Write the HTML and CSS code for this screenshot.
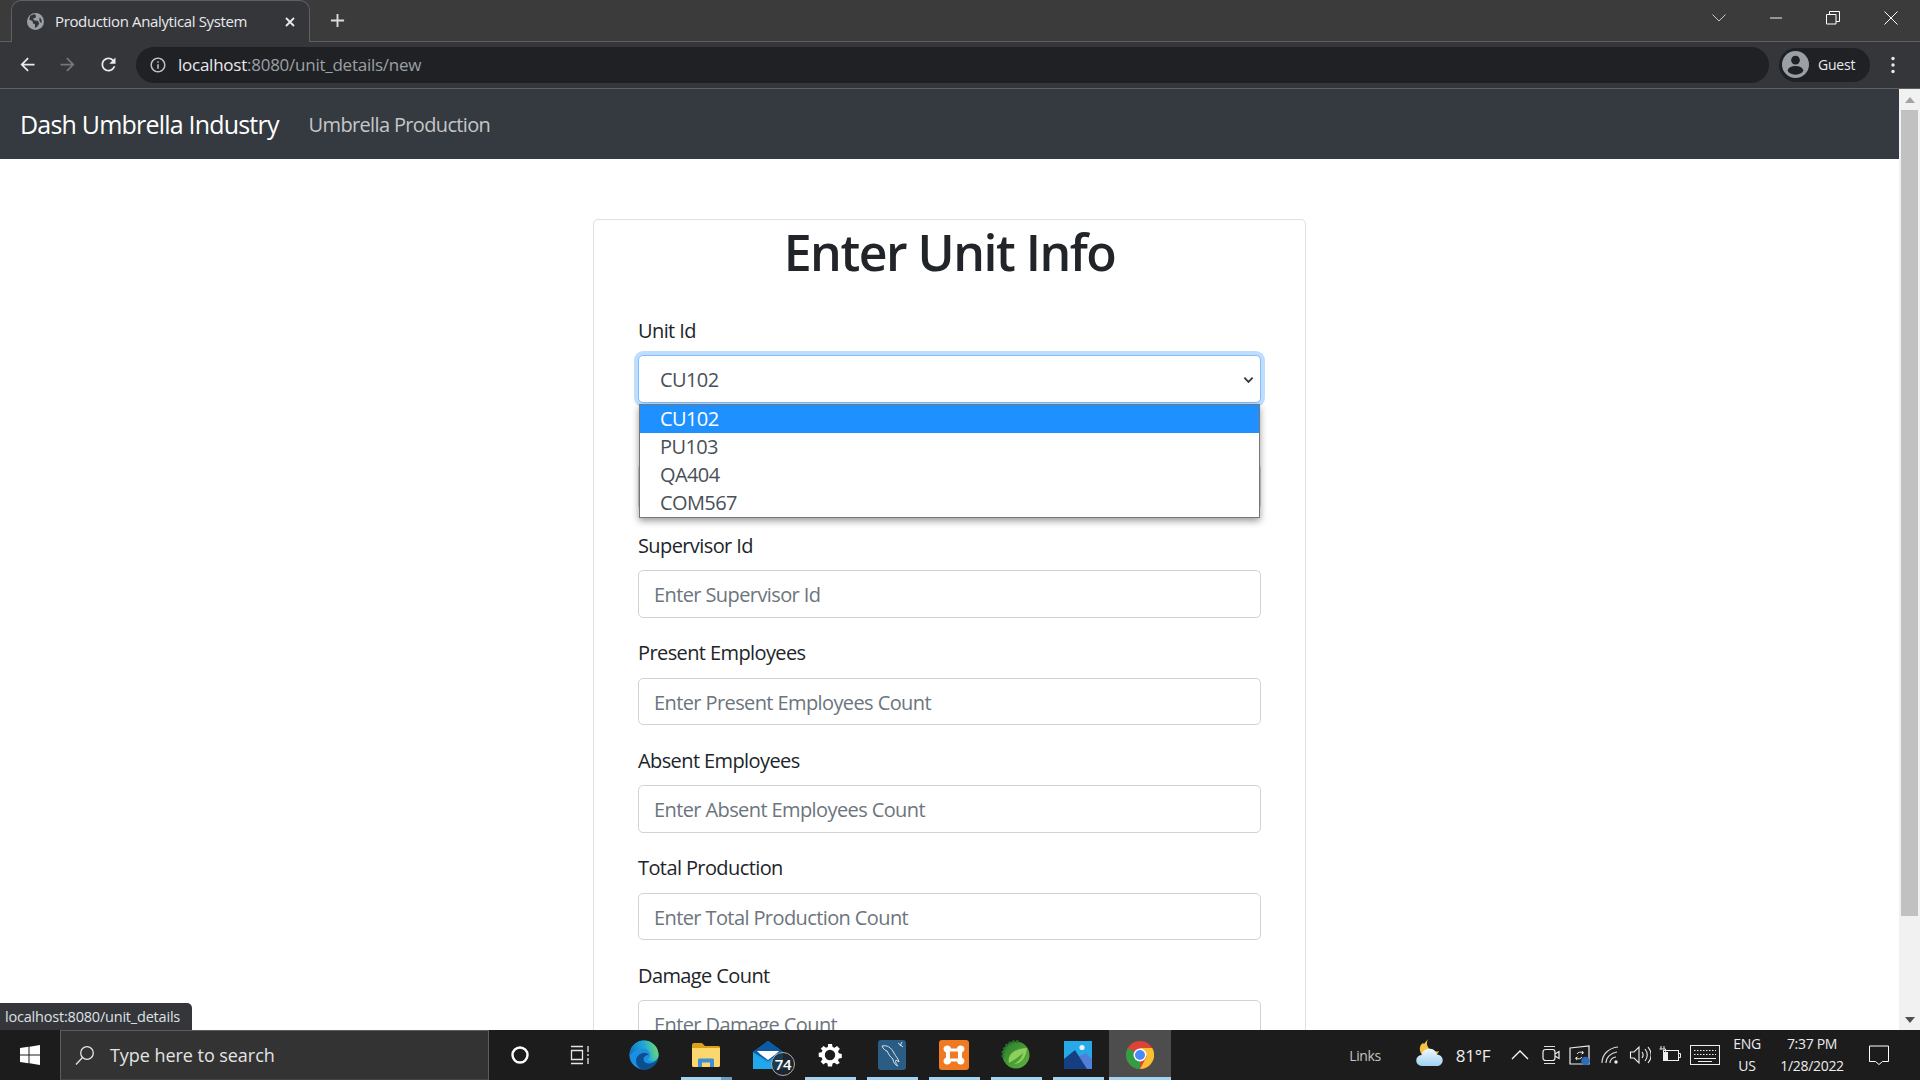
FILE: index.html
```html
<!DOCTYPE html>
<html lang="en">
<head>
<meta charset="utf-8">
<title>Production Analytical System</title>
<link rel="stylesheet" href="styles.css">
</head>
<body>
<div class="screen">
  <header class="browser">
    <div class="tabstrip">
      <div class="tab">
        <svg class="favicon" viewBox="0 0 16 16"><circle cx="8" cy="8" r="8" fill="#9aa0a6"/><path d="M7 1 3 2.500 2 6l3 1.500 1 2.500 1.500.5V14l2-1 2-3-1-2.500L7 7 5.500 5.500 8 4.500 8.500 2.500zM12 4l1.500 2 .5 3h-1.500l-1-2.500z" fill="#35363a"/></svg>
        <span class="tab-title">Production Analytical System</span>
        <svg class="tab-close" viewBox="0 0 12 12"><path d="M2 2l8 8M10 2l-8 8" stroke="#e8eaed" stroke-width="1.800"/></svg>
      </div>
      <svg class="newtab" viewBox="0 0 16 16"><path d="M8 1v14M1 8h14" stroke="#dadce0" stroke-width="2"/></svg>
      <div class="winctl">
        <svg class="wc-chev" viewBox="0 0 14 8"><path d="M.5.500l6.500 6.500 6.500-6.500" fill="none" stroke="#c8c8c8"/></svg>
        <svg class="wc-min" viewBox="0 0 14 2"><path d="M0 1h13" stroke="#fff"/></svg>
        <svg class="wc-max" viewBox="0 0 14 14"><path d="M.5 3.500h9.500v9.500h-9.500zM3.500 3.500v-3h10v10h-3.500" fill="none" stroke="#fff"/></svg>
        <svg class="wc-close" viewBox="0 0 14 14"><path d="M.5.500l13 13M13.500.500l-13 13" stroke="#fff"/></svg>
      </div>
    </div>
    <div class="toolbar">
      <svg class="tb-icon back" viewBox="0 0 24 24"><path d="M20 11H7.830l5.590-5.590L12 4l-8 8 8 8 1.410-1.410L7.830 13H20z" fill="#e8eaed"/></svg>
      <svg class="tb-icon fwd" viewBox="0 0 24 24"><path d="M4 11h12.170l-5.590-5.590L12 4l8 8-8 8-1.410-1.410L16.170 13H4z" fill="#73767a"/></svg>
      <svg class="tb-icon reload" viewBox="0 0 24 24"><path d="M17.650 6.350C16.200 4.900 14.210 4 12 4c-4.420 0-7.990 3.580-7.990 8s3.570 8 7.990 8c3.730 0 6.840-2.550 7.730-6h-2.080c-.82 2.330-3.040 4-5.650 4-3.310 0-6-2.690-6-6s2.690-6 6-6c1.660 0 3.140.69 4.220 1.780L13 11h7V4z" fill="#e8eaed"/></svg>
      <div class="omnibox">
        <svg class="info" viewBox="0 0 24 24"><path d="M11 7h2v2h-2zm0 4h2v6h-2zm1-9C6.480 2 2 6.480 2 12s4.480 10 10 10 10-4.480 10-10S17.520 2 12 2zm0 18c-4.410 0-8-3.590-8-8s3.590-8 8-8 8 3.590 8 8-3.590 8-8 8z" fill="#bdc1c6"/></svg>
        <span class="url"><span class="url-host">localhost</span>:8080/unit_details/new</span>
      </div>
      <div class="profile">
        <svg class="avatar" viewBox="0 0 28 28"><circle cx="14" cy="14" r="14" fill="#9aa0a6"/><circle cx="14" cy="9.500" r="4.500" fill="#202124"/><ellipse cx="14" cy="20" rx="8" ry="4.500" fill="#202124"/></svg>
        <span class="guest">Guest</span>
      </div>
      <svg class="kebab" viewBox="0 0 4 18"><circle cx="2" cy="2.500" r="1.700" fill="#e8eaed"/><circle cx="2" cy="9" r="1.700" fill="#e8eaed"/><circle cx="2" cy="15.500" r="1.700" fill="#e8eaed"/></svg>
    </div>
  </header>

  <div class="viewport">
    <main class="page">
      <nav class="navbar">
        <a class="brand">Dash Umbrella Industry</a>
        <a class="navlink">Umbrella Production</a>
      </nav>
      <section class="card">
        <h1>Enter Unit Info</h1>
        <div class="group select-group">
          <label>Unit Id</label>
          <div class="select" role="combobox" aria-expanded="true">
            <span>CU102</span>
            <svg class="caret" viewBox="0 0 12 8"><path d="M1.500 1.500 6 6l4.500-4.500" fill="none" stroke="#343a40" stroke-width="2"/></svg>
          </div>
          <ul class="options" role="listbox">
            <li class="selected">CU102</li>
            <li>PU103</li>
            <li>QA404</li>
            <li>COM567</li>
          </ul>
        </div>
        <div class="group"><label>&nbsp;</label><div class="input"></div></div>
        <div class="group"><label>Supervisor Id</label><div class="input">Enter Supervisor Id</div></div>
        <div class="group"><label>Present Employees</label><div class="input">Enter Present Employees Count</div></div>
        <div class="group"><label>Absent Employees</label><div class="input">Enter Absent Employees Count</div></div>
        <div class="group"><label>Total Production</label><div class="input">Enter Total Production Count</div></div>
        <div class="group"><label>Damage Count</label><div class="input">Enter Damage Count</div></div>
      </section>
      <div class="status">localhost:8080/unit_details</div>
    </main>
    <aside class="scrollbar">
      <svg class="sb-arrow" viewBox="0 0 10 6"><path d="M5 0l5 6H0z" fill="#a3a3a3"/></svg>
      <div class="sb-track"><div class="sb-thumb"></div></div>
      <svg class="sb-arrow" viewBox="0 0 10 6"><path d="M0 0h10L5 6z" fill="#505050"/></svg>
    </aside>
  </div>

  <footer class="taskbar">
    <div class="start"><svg viewBox="0 0 20 20"><path d="M0 3l8.500-1.200v7.700H0zM9.500 1.700 20 0v9.500H9.500zM0 10.500h8.500v7.700L0 17zM9.500 10.500H20V20L9.500 18.300z" fill="#fff"/></svg></div>
    <div class="search">
      <svg viewBox="0 0 20 20"><circle cx="12" cy="8" r="6.300" fill="none" stroke="#e6e6e6" stroke-width="1.300"/><path d="M7.500 12.500 1 19.500" stroke="#e6e6e6" stroke-width="1.300"/></svg>
      <span>Type here to search</span>
    </div>
    <div class="cell w61"><svg class="i18" viewBox="0 0 18 18"><circle cx="9" cy="9" r="7.500" fill="none" stroke="#fff" stroke-width="2.400"/></svg></div>
    <div class="cell w60"><svg class="i20" viewBox="0 0 20 20"><path d="M1 1.500h12M1 18.500h12M1.500 5.500h11v9h-11zM18 1v6M18 9v2M18 13v6" fill="none" stroke="#e6e6e6" stroke-width="1.300"/></svg></div>

    <div class="apps">
      <div class="app">
        <svg class="i30" viewBox="0 0 32 32"><defs><linearGradient id="eg" x1="0" y1=".6" x2="1" y2=".4"><stop offset="0" stop-color="#0f74c4"/><stop offset=".55" stop-color="#22a8d8"/><stop offset="1" stop-color="#6fdc6a"/></linearGradient></defs><circle cx="16" cy="16" r="15.500" fill="#1a8fe3"/><path d="M16 .5A15.500 15.500 0 0 1 31.500 16c0 4-3 6.500-6.500 6.500-3 0-5-1-5-2 2-1 2.500-2.500 2.500-4 0-4-3-7.500-8-7.500S5 12 .6 17C.5 8 7 .5 16 .5z" fill="url(#eg)"/><path d="M31.400 18c-1 7.500-7.400 13.500-15.400 13.500-5 0-8.500-5-8.500-9.500s4-8.500 9-8.500c2.500 0 4 1 4.500 2.500-3 0-5.500 2-5.500 4.500 0 3 3 4.500 6.500 4.500 4 0 7-2 9.400-6.500z" fill="#0c4f8f"/></svg>
      </div>
      <div class="app run">
        <svg class="folder" viewBox="0 0 28 24"><path d="M0 2c0-1 .7-2 2-2h8l3 3h13.500c.8 0 1.500.7 1.500 1.500V8H0z" fill="#d9a01a"/><path d="M0 5h28v17.500c0 .8-.7 1.500-1.500 1.500h-25C.7 24 0 23.300 0 22.500z" fill="#fbd76e"/><path d="M6 17c0-.8.700-1.500 1.500-1.500h13c.8 0 1.500.7 1.500 1.500v7h-4v-4.500h-8V24H6z" fill="#3d8fd6"/></svg>
        <i class="split"></i>
      </div>
      <div class="app">
        <svg class="mail" viewBox="0 0 30 28"><path d="M0 11 15 0l15 11v17H0z" fill="#1b9ae2"/><path d="M0 11 15 0l15 11-15 9z" fill="#0c5aa6"/><path d="M4 10h22l-3 3-8 6-8-6z" fill="#fff"/><path d="M0 12l15 10 15-10v16H0z" fill="#22a6ec"/></svg>
        <span class="badge">74</span>
      </div>
      <div class="app run">
        <svg class="i24" viewBox="0 0 24 24"><path d="M10 1h4l.6 3 1.900.8L19 3l2.800 2.800-1.800 2.600.8 1.900 3 .6v4l-3 .6-.8 1.900 1.800 2.500L19 21.600l-2.500-1.800-1.900.8-.6 3h-4l-.6-3-1.900-.8L5.500 21.600 2.700 18.800l1.800-2.500-.8-1.900-3-.6v-4l3-.6.8-1.900L2.700 5.800 5.500 3l2.500 1.800 1.900-.8zM12 6.800a5.200 5.200 0 1 0 0 10.400 5.200 5.200 0 0 0 0-10.400z" fill="#fff" fill-rule="evenodd"/></svg>
      </div>
      <div class="app run">
        <svg class="i30" viewBox="0 0 30 30"><rect x="1" width="28" height="30" rx="3" fill="#2b5d84"/><path d="M5 6c5-1 9 1 12 7 2 4 4 5 5 9l-3-2c-1 2 0 4 2 6-3-1-5-4-5-7-3-2-5-6-6-8-1 0-4-2-5-5zM21 3l5 4M25 2l-2 4" fill="none" stroke="#d5e2ec" stroke-width="1"/></svg>
      </div>
      <div class="app run">
        <svg class="i30" viewBox="0 0 30 30"><rect width="30" height="30" rx="3" fill="#ef7a22"/><path d="M6 6c3-1.500 5.500 0 6 2.500h6C18.500 6 21 4.500 24 6c2 1.500 2 5-1 6.500v5c3 1.500 3 5 1 6.500-3 1.500-5.500 0-6-2.500h-6C11.500 24 9 25.500 6 24c-2-1.500-2-5 1-6.500v-5C4 11 4 7.500 6 6zM11 11.500v7h8v-7z" fill="#fff" fill-rule="evenodd"/></svg>
      </div>
      <div class="app run">
        <svg class="i30" viewBox="0 0 30 30"><defs><linearGradient id="sg" x1="0" y1="0" x2="1" y2="1"><stop offset="0" stop-color="#2a7d2e"/><stop offset="1" stop-color="#62b33e"/></linearGradient></defs><circle cx="15" cy="15" r="13.500" fill="url(#sg)"/><path d="M2 17A13.500 13.500 0 0 1 19 2" fill="none" stroke="#256f2b" stroke-width="3" stroke-dasharray="2.200 1.600"/><path d="M8 23c-2-8 4-14 18-15-1 10-6 16-13 16 4-2 8-6 9-11-4 4-9 7-14 10z" fill="#8ccf5c"/></svg>
      </div>
      <div class="app run">
        <svg class="i28" viewBox="0 0 28 28"><rect width="28" height="28" fill="#27a9e8"/><circle cx="18" cy="6.500" r="2.600" fill="#e6f5fc"/><path d="M14 16l8-4 6 6v10H14z" fill="#4f7fd6"/><path d="M0 28V18l11-9 12 19z" fill="#163f82"/></svg>
      </div>
      <div class="app active run">
        <svg class="i28" viewBox="0 0 28 28"><circle cx="14" cy="14" r="14" fill="#db4437"/><path d="M14 14 1.900 7A14 14 0 0 0 14 28z" fill="#2f9e44"/><path d="M14 7h12.200A14 14 0 0 1 14 28l7-13z" fill="#fbc02d"/><circle cx="14" cy="14" r="6.500" fill="#fff"/><circle cx="14" cy="14" r="5" fill="#4a8af4"/></svg>
      </div>
    </div>

    <div class="tray">
      <span class="t-links">Links</span>
      <span class="t-weather"><svg class="i32" viewBox="0 0 32 32"><path d="M13 0c-2 4-1 8 2 10 3 3 7 3 9 2-2 5-8 8-14 6C4 15 3 7 8 4l1 1z" fill="#f6c244"/><defs><linearGradient id="cg" x1="0" y1="0" x2="0" y2="1"><stop offset="0" stop-color="#eef8fd"/><stop offset="1" stop-color="#9fd2f2"/></linearGradient></defs><path d="M7 27a5.500 5.500 0 0 1-.5-11 8 8 0 0 1 15.500-.5 5.800 5.800 0 0 1 1 11.500z" fill="url(#cg)"/></svg></span>
      <span class="t-temp">81°F</span>
      <span class="t-chev"><svg class="i18" viewBox="0 0 18 18"><path d="M1 13 9 5l8 8" fill="none" stroke="#fff" stroke-width="1.300"/></svg></span>
      <span class="t-video"><svg class="i20" viewBox="0 0 20 20"><path d="M3 1.500h11M3 18.500h11" stroke="#ddd" stroke-width="1"/><rect x="2" y="4.500" width="12" height="11" rx="2.500" fill="none" stroke="#eee" stroke-width="1.200"/><path d="M14 9l4-2.500v7L14 11" fill="none" stroke="#eee" stroke-width="1.200"/></svg></span>
      <span class="t-screen"><svg class="i22" viewBox="0 0 22 22"><path d="M1 4l19-2v18H1z" fill="none" stroke="#eee" stroke-width="1.200"/><path d="M8 10c1-2 4-2.500 6-1M13 7l1.500 2-2 1M13 13c-1 2-4 2.500-6 1M8 16l-1.500-2 2-1" fill="none" stroke="#eee"/><circle cx="16.500" cy="17" r="4.300" fill="#2a6ebb"/></svg></span>
      <span class="t-wifi"><svg class="i20" viewBox="0 0 20 20"><g fill="none" stroke="#ddd" stroke-width="1.100"><path d="M1 18C1 9 8 3 17 2"/><path d="M5 18c0-6 5-10 11-11"/><path d="M9 18c0-3 2.500-6 6-6"/></g><circle cx="15" cy="17" r="1.700" fill="#eee"/></svg></span>
      <span class="t-vol"><svg class="i22" viewBox="0 0 22 22"><path d="M1.500 8h3.500l5-5v16l-5-5H1.500z" fill="none" stroke="#eee" stroke-width="1.100"/><path d="M13 8c1.500 2 1.500 4 0 6M16 5c3 3.500 3 8.500 0 12M19 3c4 5 4 11 0 16" fill="none" stroke="#eee" stroke-width="1.100"/></svg></span>
      <span class="t-batt"><svg class="i22" viewBox="0 0 22 22"><rect x="4.500" y="6.500" width="15" height="10" fill="none" stroke="#eee"/><rect x="5" y="8" width="4" height="8" fill="#eee"/><path d="M20 9.500h1.500v4H20M2 2v3M5 2v3M.5 5h6v2.500l-2 2v3" fill="none" stroke="#eee"/></svg></span>
      <span class="t-kbd"><svg class="kbd" viewBox="0 0 30 20"><rect x=".5" y=".5" width="29" height="19" fill="none" stroke="#eee"/><path d="M4 5.500h22M4 9.500h22" stroke="#eee" stroke-dasharray="1.500 1.500"/><path d="M4 13.500h22M8 16.500h14" stroke="#eee"/></svg></span>
      <span class="t-lang"><span>ENG</span><span>US</span></span>
      <span class="t-clock"><span>7:37 PM</span><span>1/28/2022</span></span>
      <span class="t-notif"><svg class="notif" viewBox="0 0 20 20"><path d="M.5 1h19v15.500h-6l-3.500 3-3.500-3h-6z" fill="none" stroke="#fff"/></svg></span>
    </div>
  </footer>
</div>
</body>
</html>
```

FILE: styles.css
```css
* { box-sizing: border-box; }
html, body { margin: 0; height: 100%; overflow: hidden; }
body { font-family: "Open Sans", "Noto Sans", sans-serif; color: #212529; background: #fff; }
.screen { width: 1920px; height: 1080px; display: flex; flex-direction: column; overflow: hidden; }

/* Browser chrome */
.browser { flex: none; height: 89px; background: #35363a; display: flex; flex-direction: column; }
.tabstrip { height: 42px; background: #3b3b3b; border-bottom: 1px solid #5f6062; display: flex; align-items: center; }
.tab { width: 299px; height: 42px; margin: 0 0 0 11px; align-self: flex-start; background: #35363a; border: 1px solid #5f6062; border-bottom: 0; border-radius: 10px 10px 0 0; display: flex; align-items: center; padding: 0 13px 0 15px; }
.favicon { width: 17px; height: 17px; flex: none; }
.tab-title { margin-left: 11px; margin-top: -2px; font-size: 15px; color: #e8eaed; letter-spacing: -0.36px; white-space: nowrap; flex: 1; }
.tab-close { width: 12px; height: 12px; }
.newtab { width: 15px; height: 15px; margin-left: 20px; }
.winctl { margin-left: auto; display: flex; align-items: center; height: 36px; margin-bottom: 5px; }
.wc-chev { width: 14px; height: 8px; margin-right: 44px; }
.wc-min { width: 13px; height: 2px; margin-right: 43px; }
.wc-max { width: 14px; height: 14px; margin-right: 44px; }
.wc-close { width: 14px; height: 14px; margin-right: 22px; }

.toolbar { height: 47px; border-bottom: 1px solid #5f6062; display: flex; align-items: center; padding: 0 0 1px; }
.tb-icon { width: 21px; height: 21px; flex: none; }
.back { margin-left: 17px; }
.fwd { margin-left: 19px; }
.reload { margin-left: 20px; }
.omnibox { margin-left: 17px; width: 1633px; height: 36px; border-radius: 18px; background: #202124; display: flex; align-items: center; padding-left: 13px; }
.info { width: 18px; height: 18px; flex: none; }
.url { margin-left: 11px; font-size: 17px; color: #9aa0a6; letter-spacing: -0.25px; }
.url-host { color: #e8eaed; }
.profile { margin-left: 10px; width: 91px; height: 34px; border-radius: 17px; background: #202124; display: flex; align-items: center; padding-left: 3px; }
.avatar { width: 27px; height: 27px; }
.guest { margin-left: 9px; font-size: 14px; color: #e8eaed; letter-spacing: -0.2px; }
.kebab { width: 4px; height: 18px; margin-left: 21px; }

/* Page */
.viewport { flex: 1; min-height: 0; display: flex; }
.page { flex: 1; min-width: 0; position: relative; overflow: hidden; }
.navbar { height: 70px; background: #343a40; display: flex; align-items: center; padding: 0 20px; }
.brand { font-size: 25px; color: #fff; letter-spacing: -0.8px; }
.navlink { margin-left: 30px; font-size: 20px; color: rgba(255,255,255,.72); letter-spacing: -0.65px; }
.card { width: 713px; margin: 60px auto 0; border: 1px solid #dfdfdf; border-radius: 5px; padding: 2px 44px 0; }
h1 { margin: 0 0 33px; font-size: 50px; font-weight: 600; line-height: 60px; text-align: center; letter-spacing: -1.5px; color: #212529; }
.group { margin-bottom: 20px; position: relative; }
label { display: block; font-size: 20px; line-height: 30px; padding-top: .5px; margin-bottom: 9.5px; letter-spacing: -0.6px; color: #212529; }
.input { height: 47.5px; border: 1px solid #ced4da; border-radius: 5px; padding: 0 15px; font-size: 20px; line-height: 48.5px; color: #6c757d; letter-spacing: -0.6px; }
.select { height: 47.5px; border: 1px solid #80bdff; border-radius: 5px; box-shadow: 0 0 0 4px rgba(0,123,255,.25); display: flex; align-items: center; justify-content: space-between; padding: 2px 6px 0 21px; font-size: 20px; color: #495057; letter-spacing: -0.6px; background: #fff; }
.caret { width: 11px; height: 8px; }
.options { position: absolute; left: 1px; right: 1px; top: 88.5px; z-index: 2; margin: 0; padding: 0; list-style: none; background: #fff; border: 1px solid #767676; box-shadow: 0 3px 7px rgba(0,0,0,.4); font-size: 20px; color: #495057; letter-spacing: -0.6px; }
.options li { height: 28px; line-height: 28px; padding-left: 20px; }
.options .selected { background: #1e90ff; color: #fff; }
.status { position: absolute; left: 0; bottom: 0; height: 27px; width: 192px; background: #35363a; border-radius: 0 5px 0 0; padding-left: 5px; font-size: 14.500px; line-height: 27px; color: #dee1e6; letter-spacing: -0.2px; white-space: nowrap; }

.scrollbar { flex: none; width: 21px; background: #f1f1f1; display: flex; flex-direction: column; align-items: center; }
.sb-arrow { width: 10px; height: 6px; flex: none; margin: 8px 0 7px; }
.sb-track { flex: 1; align-self: stretch; padding: 0 2px; }
.sb-thumb { height: 806px; background: #c1c1c1; }

/* Taskbar */
.taskbar { flex: none; height: 50px; background: #1c1c1c; display: flex; align-items: center; color: #fff; }
.start { width: 60px; height: 50px; display: flex; align-items: center; justify-content: center; }
.start svg { width: 20px; height: 20px; }
.search { width: 429px; height: 50px; background: #333; border: 1px solid #5c5c5c; border-bottom-color: #444; display: flex; align-items: center; padding-left: 14px; }
.search svg { width: 20px; height: 20px; flex: none; }
.search span { margin-left: 15px; font-size: 18px; color: #e4e4e4; letter-spacing: -0.05px; }
.cell { height: 50px; display: flex; align-items: center; justify-content: center; }
.w61 { width: 61px; }
.w60 { width: 60px; }
.i18 { width: 18px; height: 18px; }
.i20 { width: 20px; height: 20px; }
.i22 { width: 22px; height: 22px; }
.i24 { width: 24px; height: 24px; }
.i28 { width: 28px; height: 28px; }
.i30 { width: 30px; height: 30px; }
.i32 { width: 32px; height: 32px; }
.folder { width: 28px; height: 24px; margin-top: -1px; }
.mail { width: 30px; height: 28px; }
.apps { display: flex; margin-left: 3px; height: 50px; }
.app { width: 62px; height: 50px; display: flex; align-items: center; justify-content: center; position: relative; }
.run::after { content: ""; position: absolute; left: 6px; right: 5px; bottom: 0; height: 3px; background: #a6d2f2; }
.active { background: #4d4d4d; }
.active::after { left: 0; right: 0; }
.split { position: absolute; left: 46px; bottom: 0; width: 11px; height: 3px; background: #6f9dbd; z-index: 1; }
.badge { position: absolute; left: 34px; top: 22px; width: 24px; height: 24px; border-radius: 50%; background: rgba(28,40,52,.85); border: 1px solid #aaa; font-size: 15px; font-weight: 600; line-height: 22px; text-align: center; letter-spacing: -0.4px; }

.tray { display: flex; align-items: center; margin-left: 169px; height: 50px; color: #ececec; }
.tray > span { display: flex; align-items: center; justify-content: center; flex: none; height: 50px; }
.t-links { width: 50px; font-size: 14px; color: #c4c4c4; letter-spacing: -0.4px; }
.t-weather { width: 32px; margin-left: 25px; }
.t-temp { width: 46px; margin-left: 3px; font-size: 17px; letter-spacing: -0.2px; }
.t-chev { width: 24px; margin-left: 12px; }
.t-video { width: 30px; margin-left: 4px; }
.t-screen { width: 28px; }
.t-wifi { width: 30px; margin-left: 2px; }
.t-vol { width: 28px; }
.t-batt { width: 30px; margin-left: 1px; }
.t-kbd { width: 40px; }
.kbd { width: 30px; height: 20px; }
.t-lang, .t-clock { flex-direction: column; font-size: 14px; line-height: 22px; letter-spacing: -0.3px; }
.t-lang { width: 40px; margin-left: 2px; }
.t-clock { width: 80px; margin-left: 5px; }
.t-notif { width: 42px; margin-left: 6px; }
.notif { width: 20px; height: 20px; }
```
